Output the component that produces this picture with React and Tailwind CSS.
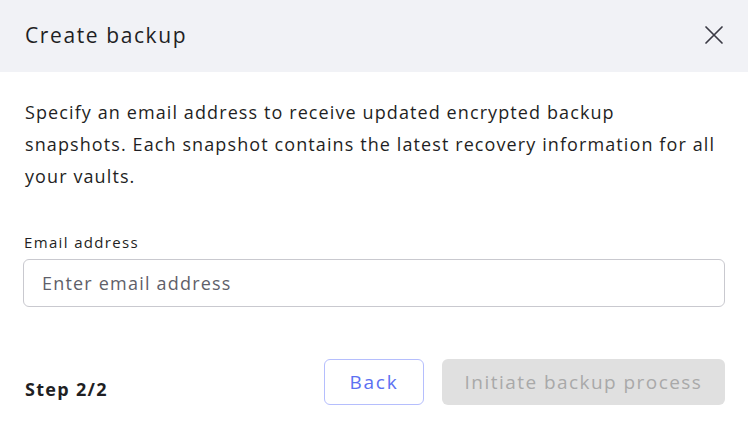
import React, { useState } from 'react';

const CreateBackup = () => {
  const [email, setEmail] = useState('');

  return (
    <div className="w-[748px] h-[428px] bg-white flex flex-col text-[#1f1f24]" style={{ fontFamily: '"Open Sans", "Noto Sans", sans-serif' }}>
      {/* Header */}
      <div className="h-[72px] bg-[#f1f2f6] flex items-center justify-between pl-[25px] pr-[24px]">
        <h2 className="text-[21px] tracking-[1.6px] text-[#1f1f24]">Create backup</h2>
        <button type="button" className="text-[#3a3a44] -mt-[3px]">
          <svg width="20" height="20" viewBox="0 0 20 20" fill="none" stroke="currentColor" strokeWidth="1.7" strokeLinecap="round">
            <path d="M2 2L18 18M18 2L2 18" />
          </svg>
        </button>
      </div>

      {/* Body */}
      <div className="px-[23px] pt-[24px]">
        <p className="text-[18px] leading-[32px] tracking-[1.1px] pl-[2px] whitespace-nowrap">
          Specify an email address to receive updated encrypted backup
          <br />
          snapshots. Each snapshot contains the latest recovery information for all
          <br />
          your vaults.
        </p>

        <label className="block mt-[40px] text-[15px] leading-[20px] tracking-[1.35px] pl-[1px]">Email address</label>
        <input
          type="email"
          value={email}
          onChange={(e) => setEmail(e.target.value)}
          placeholder="Enter email address"
          className="mt-[7px] w-full h-[48px] rounded-[6px] border border-[#c9c9cf] px-[18px] text-[18px] tracking-[1.2px] placeholder-[#5f5f6a] outline-none"
        />
      </div>

      {/* Footer */}
      <div className="mt-auto mb-[23px] px-[23px] flex items-center justify-between">
        <span className="pl-[2px] text-[18px] font-bold tracking-[1.3px] pt-[14px]">Step 2/2</span>
        <div className="flex gap-[18px]">
          <button type="button" className="w-[100px] h-[46px] rounded-[6px] border border-[#b5befd] text-[#5c70f2] text-[19px] tracking-[1.8px]">
            Back
          </button>
          <button type="button" disabled className="w-[283px] h-[46px] rounded-[6px] bg-[#e0e0e0] text-[#a9a9a9] text-[19px] tracking-[1.45px]">
            Initiate backup process
          </button>
        </div>
      </div>
    </div>
  );
};

export default CreateBackup;
